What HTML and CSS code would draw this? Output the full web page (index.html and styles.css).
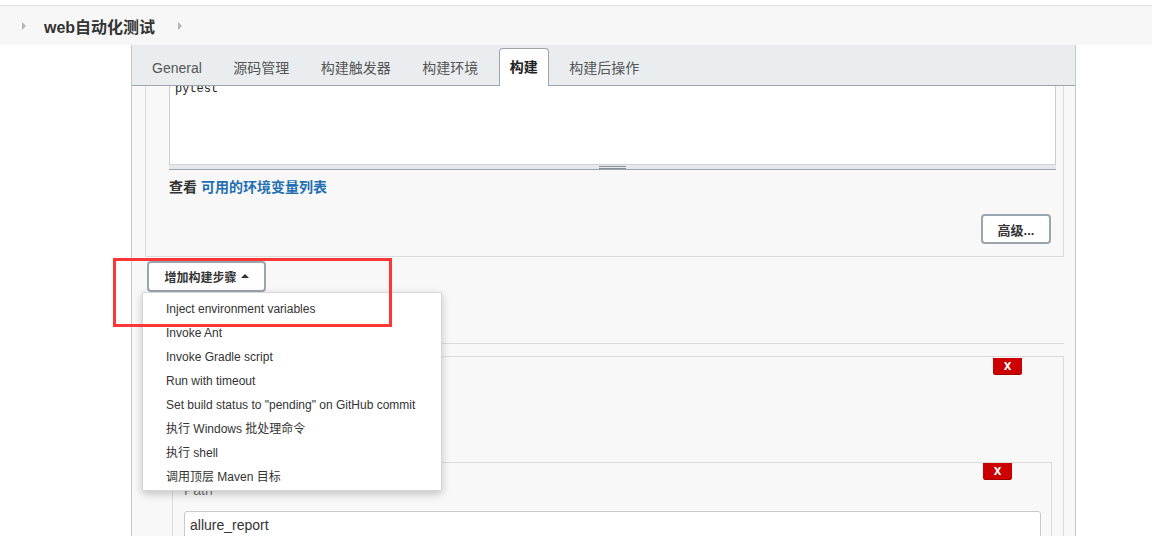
FILE: index.html
```html
<!DOCTYPE html>
<html lang="zh-CN">
<head>
<meta charset="utf-8">
<title>web自动化测试 Config</title>
<link rel="stylesheet" href="styles.css">
</head>
<body>
<div class="page">
  <div class="topline"></div>
  <div class="crumbs">
    <span class="tri"></span>
    <span class="crumb-title">web自动化测试</span>
    <span class="tri tri-2"></span>
  </div>
  <div class="main">
    <div class="config">
      <div class="tabs">
        <div class="tab">General</div>
        <div class="tab">源码管理</div>
        <div class="tab">构建触发器</div>
        <div class="tab">构建环境</div>
        <div class="tab active">构建</div>
        <div class="tab">构建后操作</div>
      </div>
      <div class="config-body">
        <div class="section s1">
          <div class="textarea"><div class="code">pytest</div></div>
          <div class="resizer"><span class="grip"></span></div>
          <div class="envlink">查看 <span class="link">可用的环境变量列表</span></div>
          <div class="adv-row"><button class="btn adv-btn">高级...</button></div>
        </div>
        <div class="add-step">
          <button class="btn add-btn">增加构建步骤 <span class="caret"></span></button>
          <ul class="menu">
            <li>Inject environment variables</li>
            <li>Invoke Ant</li>
            <li>Invoke Gradle script</li>
            <li>Run with timeout</li>
            <li>Set build status to "pending" on GitHub commit</li>
            <li>执行 Windows 批处理命令</li>
            <li>执行 shell</li>
            <li>调用顶层 Maven 目标</li>
          </ul>
        </div>
        <div class="sep"></div>
        <div class="section s2">
          <div class="chunk-head outer-head"><span class="del">X</span></div>
          <div class="inner">
            <div class="chunk-head inner-head"><span class="del">X</span></div>
            <div class="label">Path</div>
            <div class="input">allure_report</div>
          </div>
        </div>
      </div>
    </div>
  </div>
  <div class="highlight"></div>
</div>
</body>
</html>
```
FILE: styles.css
```css
* { box-sizing: border-box; }
html, body { margin: 0; padding: 0; background: #fff; }
body {
  font-family: "Liberation Sans", "Noto Sans CJK SC", sans-serif;
  color: #333;
}
.page {
  position: relative;
  width: 1152px;
  height: 536px;
  overflow: hidden;
  background: #fff;
}
.topline {
  height: 6px;
  background: #fff;
  border-bottom: 1px solid #e2e2e2;
}
.crumbs {
  height: 39px;
  background: #f7f7f7;
  display: flex;
  align-items: center;
  padding-left: 22px;
}
.tri {
  width: 0;
  height: 0;
  border-left: 4px solid #b5b5b5;
  border-top: 4px solid transparent;
  border-bottom: 4px solid transparent;
}
.crumb-title {
  margin-left: 18px;
  font-size: 16px;
  font-weight: bold;
  color: #333;
}
.tri-2 { margin-left: 23px; }

.main {
  padding-left: 131px;
  display: flex;
}
.config {
  width: 945px;
  height: 491px;
  border-left: 1px solid #c8c8c8;
  border-right: 1px solid #c8c8c8;
  background: #f8f8f8;
}
.tabs {
  height: 41px;
  background: #e9edf0;
  border-bottom: 1px solid #9ba4ad;
  display: flex;
  align-items: flex-end;
  padding-left: 9px;
  gap: 9.5px;
}
.tab {
  height: 36px;
  line-height: 38px;
  padding: 0 11px;
  font-size: 14px;
  color: #555;
  white-space: nowrap;
}
.tab.active {
  height: 38px;
  line-height: 37px;
  padding: 0 10px;
  margin-bottom: -1px;
  background: #fff;
  border: 1px solid #9ba4ad;
  border-bottom: none;
  border-radius: 4px 4px 0 0;
  color: #222;
  font-weight: bold;
}
.config-body {
  height: 450px;
  overflow: hidden;
  background: #f8f8f8;
}
.section {
  border: 1px solid #dcdcdc;
  background: #f8f8f8;
}
.s1 {
  margin: -14px 11px 0 13px;
  padding: 5px 7px 12px 23px;
}
.textarea {
  height: 86px;
  background: #fff;
  border: 1px solid #c9cdd0;
  border-bottom: none;
  padding: 2px 5px;
}
.code {
  font-family: "Liberation Mono", monospace;
  font-size: 12px;
  line-height: 16px;
  color: #222;
}
.resizer {
  height: 6px;
  background: #e6e9ec;
  border-top: 1px solid #cfd3d6;
  border-bottom: 1px solid #9ba4ad;
  display: flex;
  justify-content: center;
}
.grip {
  width: 27px;
  height: 3px;
  margin-top: 1px;
  border-top: 1px solid #888f93;
  border-bottom: 1px solid #888f93;
}
.envlink {
  margin-top: 7px;
  line-height: 20px;
  font-size: 14px;
  font-weight: bold;
  color: #333;
}
.link { color: #1f6fb2; }
.adv-row {
  display: flex;
  justify-content: flex-end;
  margin-top: 17px;
}
.btn {
  font-family: "Liberation Sans", "Noto Sans CJK SC", sans-serif;
  background: #fff;
  border: 2px solid #9ba5ad;
  border-radius: 4px;
  color: #333;
  font-weight: bold;
  padding: 0;
  margin: 0;
  cursor: pointer;
}
.adv-btn {
  width: 70px;
  height: 30px;
  margin-right: 5px;
  font-size: 13px;
}
.add-step {
  position: relative;
  margin: 4px 0 0 15px;
  height: 31px;
}
.add-btn {
  width: 119px;
  height: 31px;
  font-size: 12px;
  display: flex;
  align-items: center;
  justify-content: center;
  gap: 4px;
}
.caret {
  width: 0;
  height: 0;
  border-bottom: 4px solid #333;
  border-left: 4px solid transparent;
  border-right: 4px solid transparent;
  margin-top: -2px;
}
.menu {
  position: absolute;
  top: 31px;
  left: -5px;
  width: 300px;
  height: 199px;
  margin: 0;
  padding: 4px 0 0;
  list-style: none;
  background: #fff;
  border: 1px solid #d8d8d8;
  box-shadow: 0 3px 8px rgba(0, 0, 0, 0.22);
  z-index: 5;
}
.menu li {
  height: 24px;
  line-height: 24px;
  padding-left: 23px;
  font-size: 12px;
  color: #333;
  white-space: nowrap;
}
.sep {
  margin: 51px 11px 0 13px;
  border-top: 1px solid #dcdcdc;
}
.s2 {
  margin: 12px 11px 0 13px;
  padding: 1px 11px 0 26px;
  border-left-color: transparent;
  border-bottom: none;
  height: 200px;
}
.chunk-head {
  display: flex;
  justify-content: flex-end;
}
.outer-head { margin-right: 30px; }
.del {
  width: 29px;
  height: 17px;
  background: #cc0000;
  color: #fff;
  font-family: "DejaVu Sans Condensed", "DejaVu Sans", sans-serif;
  font-weight: bold;
  font-size: 11px;
  line-height: 17px;
  text-align: center;
  border-radius: 0 0 3px 3px;
  box-shadow: inset 0 -1px 0 #a40000;
}
.inner {
  margin-top: 87px;
  border: 1px solid #dcdcdc;
  border-bottom: none;
  padding: 0 10px 0 11px;
  height: 120px;
}
.inner-head { margin-right: 29px; }
.label {
  margin-top: 0;
  line-height: 20px;
  font-size: 14px;
  color: #777;
}
.input {
  margin-top: 11px;
  height: 28px;
  line-height: 26px;
  background: #fff;
  border: 1px solid #c9c9c9;
  border-radius: 3px;
  padding: 0 5px;
  font-size: 14px;
  color: #333;
}
.highlight {
  position: absolute;
  left: 113px;
  top: 258px;
  width: 279px;
  height: 69px;
  border: 3px solid #ff3636;
  z-index: 10;
}
```
